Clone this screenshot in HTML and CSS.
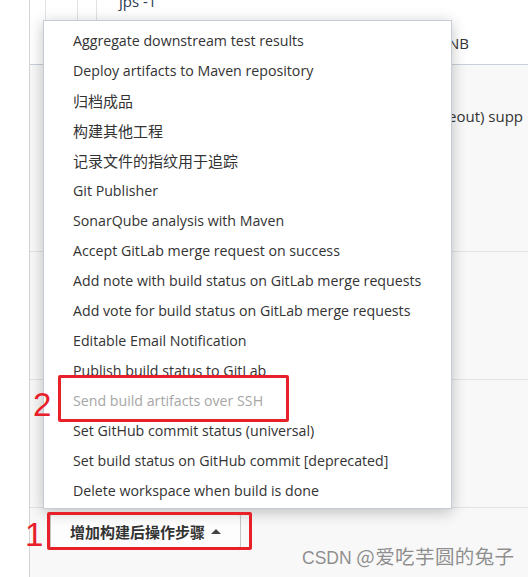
FILE: index.html
```html
<!DOCTYPE html>
<html lang="zh">
<head>
<meta charset="utf-8">
<link rel="stylesheet" href="styles.css">
</head>
<body>
<div class="page">
  <div class="sidebar"></div>
  <div class="main">
    <div class="top-row">
      <div class="cells">
        <div class="cell c1"></div>
        <div class="cell c2"></div>
        <div class="cell c3"></div>
        <div class="cell c4"><span class="jps">jps -1</span></div>
      </div>
      <div class="nb-line">NB</div>
    </div>
    <div class="row row1"><span class="eout">eout) supp</span></div>
    <div class="row row2"></div>
    <div class="row row3"></div>
    <div class="actions">
      <button class="add-btn">增加构建后操作步骤 <span class="tri"></span></button>
    </div>
  </div>
</div>

<ul class="menu">
  <li>Aggregate downstream test results</li>
  <li>Deploy artifacts to Maven repository</li>
  <li class="cjk">归档成品</li>
  <li class="cjk">构建其他工程</li>
  <li class="cjk">记录文件的指纹用于追踪</li>
  <li>Git Publisher</li>
  <li>SonarQube analysis with Maven</li>
  <li>Accept GitLab merge request on success</li>
  <li>Add note with build status on GitLab merge requests</li>
  <li>Add vote for build status on GitLab merge requests</li>
  <li>Editable Email Notification</li>
  <li>Publish build status to GitLab</li>
  <li class="disabled">Send build artifacts over SSH</li>
  <li>Set GitHub commit status (universal)</li>
  <li>Set build status on GitHub commit [deprecated]</li>
  <li>Delete workspace when build is done</li>
</ul>

<div class="mark mark2"></div>
<div class="num num2">2</div>
<div class="mark mark1"></div>
<div class="num num1">1</div>

<div class="watermark"><span class="wm-latin">CSDN</span> @爱吃芋圆的兔子</div>
</body>
</html>
```
FILE: styles.css
```css
* { box-sizing: border-box; }
html, body { margin: 0; padding: 0; }
body {
  width: 528px;
  height: 577px;
  overflow: hidden;
  background: #fff;
  font-family: "Open Sans", "Noto Sans CJK SC", sans-serif;
  font-size: 14px;
  color: #333;
  position: relative;
}
.page { display: flex; height: 577px; }
.sidebar { width: 29px; background: #fff; flex: none; }
.main {
  flex: 1;
  border-left: 1px solid #d4d4d4;
  background: #f8f8f8;
  display: flex;
  flex-direction: column;
}
.top-row {
  height: 65px;
  background: #fff;
  border-bottom: 1px solid #c9d0d8;
  position: relative;
}
.cells { display: flex; height: 20px; }
.cell { border-right: 1px solid #e2e2e2; height: 20px; }
.c1 { width: 16px; }
.c2 { width: 32px; }
.c3 { width: 19px; }
.c4 { border-right: none; padding-left: 22px; overflow: hidden; }
.jps {
  display: block;
  margin-top: -9px;
  font-size: 15px;
  line-height: 20px;
  color: #2b3a55;
}
.nb-line {
  padding-left: 418px;
  padding-top: 13px;
  font-size: 15px;
  color: #333;
}
.row { border-bottom: 1px solid #e2e2e2; }
.row1 { height: 187px; padding: 41px 0 0 418px; font-size: 15px; }
.row2 { height: 128px; }
.row3 { height: 128px; }
.actions { padding: 6px 0 0 20px; }
.add-btn {
  width: 191px;
  height: 34px;
  background: #fdfdfd;
  border: 1px solid #c4c4c4;
  border-radius: 2px;
  font-family: "Noto Sans CJK SC", sans-serif;
  font-weight: 600;
  font-size: 15px;
  color: #333;
  text-align: left;
  padding: 0 0 0 19px;
  display: flex;
  align-items: center;
  gap: 6px;
}
.tri {
  width: 0; height: 0;
  border-left: 5px solid transparent;
  border-right: 5px solid transparent;
  border-bottom: 5px solid #444;
}
.menu {
  position: absolute;
  left: 43px;
  top: 20px;
  width: 409px;
  height: 489px;
  margin: 0;
  padding: 5px 0 0 0;
  list-style: none;
  background: #fff;
  border: 1px solid #c5ccd4;
  box-shadow: 0 3px 14px rgba(0,0,0,0.24);
}
.menu li {
  height: 30px;
  line-height: 30px;
  padding-left: 29px;
  font-size: 14.2px;
  color: #333;
  white-space: nowrap;
}
.menu li.cjk { font-size: 15px; }
.menu li.disabled { color: #a6a6a6; }
.mark {
  position: absolute;
  border: 3px solid #e8202a;
  border-radius: 2px;
}
.mark2 { left: 58px; top: 375px; width: 231px; height: 47px; }
.mark1 { left: 47px; top: 512px; width: 205px; height: 38px; }
.num {
  position: absolute;
  color: #e8202a;
  font-family: "Liberation Sans", sans-serif;
  font-size: 33px;
  line-height: 1;
}
.num2 { left: 33px; top: 388px; }
.num1 { left: 25px; top: 518px; }
.watermark {
  position: absolute;
  left: 302px;
  top: 543px;
  font-family: "Noto Sans CJK SC", sans-serif;
  font-size: 19.5px;
  line-height: 26px;
  letter-spacing: 0.4px;
  color: #8e8e8e;
  text-shadow: 0 0 1px #fff, 0 0 1px #fff;
}
.wm-latin {
  font-family: "Liberation Sans", sans-serif;
  font-size: 17.5px;
  letter-spacing: 0;
}
```
